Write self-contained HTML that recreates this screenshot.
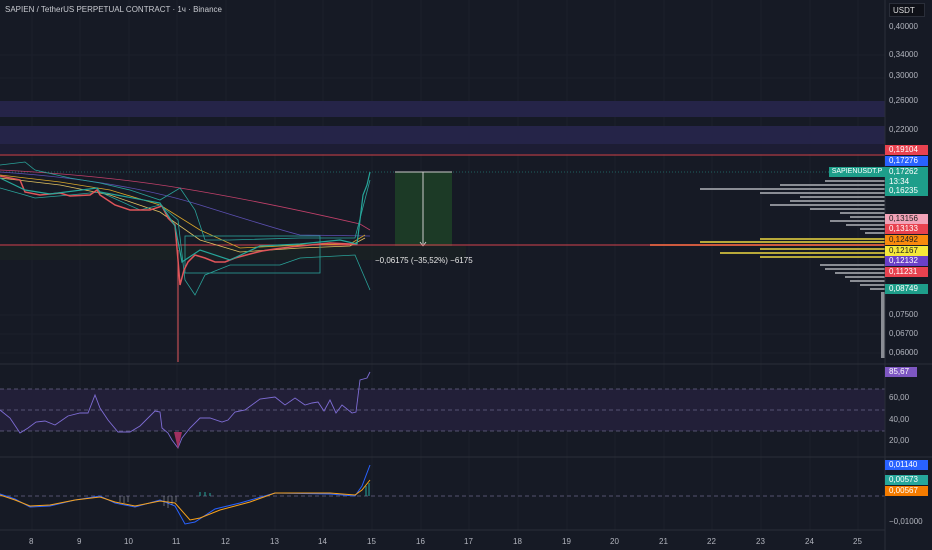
<!DOCTYPE html>
<html><head><meta charset="utf-8"><style>
body{margin:0;width:932px;height:550px;background:#161a25;overflow:hidden;font-family:"Liberation Sans",sans-serif;}
svg{position:absolute;left:0;top:0}
.t{position:absolute;font-size:8px;color:#b2b5be;}
.lb{position:absolute;left:885px;width:43px;height:10px;font-size:8px;line-height:10px;color:#fff;padding-left:4px;box-sizing:border-box;}
.ax{position:absolute;left:889px;font-size:8px;color:#b2b5be;}
</style></head><body>
<svg width="932" height="550">
<g stroke="#1c202b" stroke-width="1">
<line x1="32" y1="0" x2="32" y2="530"/><line x1="80" y1="0" x2="80" y2="530"/><line x1="129" y1="0" x2="129" y2="530"/><line x1="177" y1="0" x2="177" y2="530"/><line x1="226" y1="0" x2="226" y2="530"/><line x1="275" y1="0" x2="275" y2="530"/><line x1="323" y1="0" x2="323" y2="530"/><line x1="372" y1="0" x2="372" y2="530"/><line x1="421" y1="0" x2="421" y2="530"/><line x1="469" y1="0" x2="469" y2="530"/><line x1="518" y1="0" x2="518" y2="530"/><line x1="567" y1="0" x2="567" y2="530"/><line x1="615" y1="0" x2="615" y2="530"/><line x1="664" y1="0" x2="664" y2="530"/><line x1="712" y1="0" x2="712" y2="530"/><line x1="761" y1="0" x2="761" y2="530"/><line x1="810" y1="0" x2="810" y2="530"/><line x1="858" y1="0" x2="858" y2="530"/>
<line x1="0" y1="55" x2="885" y2="55"/><line x1="0" y1="78" x2="885" y2="78"/><line x1="0" y1="315" x2="885" y2="315"/><line x1="0" y1="334" x2="885" y2="334"/><line x1="0" y1="353" x2="885" y2="353"/>
</g>
<rect x="0" y="101" width="885" height="16" fill="#252448"/>
<rect x="0" y="126" width="885" height="18" fill="#252448"/>
<rect x="0" y="144" width="885" height="10" fill="#1d1d34"/>
<line x1="0" y1="155" x2="885" y2="155" stroke="#d4434d" stroke-width="1"/>
<line x1="0" y1="172" x2="885" y2="172" stroke="#26a69a" stroke-dasharray="1,2" stroke-width="0.6"/>
<rect x="395" y="172" width="57" height="74" fill="#1c3a26"/>
<line x1="395" y1="172" x2="452" y2="172" stroke="#ccc"/>
<line x1="423" y1="172" x2="423" y2="245" stroke="#ccc"/>
<path d="M420 242 L423 246 L426 242" stroke="#ccc" fill="none"/>
<rect x="0" y="246" width="466" height="14" fill="#1b2422" opacity="0.7"/>
<g fill="#8a8d94">
<rect x="825" y="180" width="60" height="2"/><rect x="780" y="184" width="105" height="2"/><rect x="700" y="188" width="185" height="2"/><rect x="760" y="192" width="125" height="2"/><rect x="800" y="196" width="85" height="2"/><rect x="790" y="200" width="95" height="2"/><rect x="770" y="204" width="115" height="2"/><rect x="810" y="208" width="75" height="2"/><rect x="840" y="212" width="45" height="2"/><rect x="850" y="216" width="35" height="2"/><rect x="830" y="220" width="55" height="2"/><rect x="846" y="224" width="39" height="2"/><rect x="860" y="228" width="25" height="2"/><rect x="865" y="232" width="20" height="2"/>
<rect x="820" y="264" width="65" height="2"/><rect x="825" y="268" width="60" height="2"/><rect x="835" y="272" width="50" height="2"/><rect x="845" y="276" width="40" height="2"/><rect x="850" y="280" width="35" height="2"/><rect x="860" y="284" width="25" height="2"/><rect x="870" y="288" width="15" height="2"/>
<rect x="881" y="292" width="4" height="66"/>
</g>
<g fill="#b8a93a">
<rect x="760" y="238" width="125" height="2"/><rect x="700" y="241" width="185" height="2"/><rect x="650" y="244" width="235" height="2" fill="#c9702e"/><rect x="760" y="248" width="125" height="2"/><rect x="720" y="252" width="165" height="2"/><rect x="760" y="256" width="125" height="2"/>
</g>
<line x1="0" y1="245" x2="885" y2="245" stroke="#d4434d" stroke-width="1"/>
<g fill="none" stroke-width="0.8">
<path d="M0 170 Q100 175 180 188 T360 224 L370 230" stroke="#c2406a"/>
<path d="M0 172 Q120 180 200 205 T300 235 L370 236" stroke="#5b4fb0"/>
<path d="M0 175 L60 182 L110 190 L160 205 L200 230 L240 248 L300 245 L350 244 L365 235" stroke="#d9a62a"/>
<path d="M0 178 L60 185 L110 195 L160 212 L200 240 L240 252 L300 248 L350 246 L365 238" stroke="#e0c060"/>
<path d="M0 165 L25 162 L35 170 L70 178 L100 183 L130 190 L160 200 L180 188 L195 210 L205 240 L230 240 L300 238 L355 238 L370 180" stroke="#2aa39a"/>
<path d="M0 188 L25 195 L35 198 L70 195 L100 192 L140 210 L160 205 L178 220 L185 280 L195 295 L205 275 L230 265 L280 265 L300 258 L355 255 L370 290" stroke="#2aa39a"/>
<rect x="185" y="236" width="135" height="37" stroke="#2aa39a"/>
</g>
<polyline fill="none" stroke="#e0555a" stroke-width="1.5" points="0,176 10,178 20,180 25,192 40,195 60,193 70,196 90,195 97,190 100,195 115,205 130,210 150,210 162,206 168,218 175,225 178,260 180,285 184,270 188,262 195,255 205,258 215,262 225,262 235,258 250,254 262,251 275,249 290,247 310,245 330,243 350,244 357,244"/>
<polyline fill="none" stroke="#26a69a" stroke-width="1.2" points="0,178 25,190 50,194 97,188 100,192 160,203 175,226 182,262 200,250 230,260 260,246 300,244 340,240 357,244 360,220 363,195 367,185 370,172"/>
<line x1="178" y1="250" x2="178" y2="362" stroke="#e0555a" stroke-width="1"/>
<text x="375" y="263" font-size="8" fill="#e6e6e6" font-family="Liberation Sans">−0,06175 (−35,52%) −6175</text>
<line x1="0" y1="364" x2="932" y2="364" stroke="#2a2e39"/>
<rect x="0" y="389" width="885" height="42" fill="#221f38"/>
<g stroke="#6a6588" stroke-dasharray="4,3" stroke-width="0.8">
<line x1="0" y1="389" x2="885" y2="389"/><line x1="0" y1="410" x2="885" y2="410"/><line x1="0" y1="431" x2="885" y2="431"/></g>
<polyline fill="none" stroke="#7e6cd4" stroke-width="0.9" points="0,410 10,418 20,433 28,428 36,422 45,421 55,425 68,416 80,413 88,413 95,395 100,408 108,420 118,432 130,432 140,426 155,411 160,412 162,428 168,433 172,440 178,448 182,438 190,428 200,418 210,418 222,422 228,420 235,412 245,410 260,399 275,397 285,405 295,398 305,405 312,403 318,402 324,411 330,400 336,413 342,405 352,413 356,412 360,380 367,378 370,372"/>
<path d="M174 432 L178 449 L182 432 Z" fill="#a03060"/>
<line x1="0" y1="457" x2="932" y2="457" stroke="#2a2e39"/>
<line x1="0" y1="496" x2="885" y2="496" stroke="#6a6588" stroke-dasharray="4,3" stroke-width="0.8"/>
<polyline fill="none" stroke="#2962ff" stroke-width="1" points="0,494 15,499 30,507 50,506 75,500 100,496 115,503 135,507 160,500 175,506 185,524 195,522 215,509 240,503 275,493 330,494 355,496 362,486 370,465"/>
<polyline fill="none" stroke="#f7a21b" stroke-width="1" points="0,495 15,500 30,506 50,505 75,500 100,497 115,502 135,506 160,501 175,503 190,520 200,518 220,510 250,502 275,493 330,493 355,495 362,490 370,480"/>
<g stroke="#b2b5be" stroke-width="0.5"><path d="M120 496 V502 M124 496V503 M128 496V502 M164 496V506 M168 496V508 M172 496V505 M176 496V502"/></g>
<path d="M200 496 V492 M205 496V492 M210 496V493 M366 496V486 M369 496V483" stroke="#26a69a"/>
<line x1="885" y1="0" x2="885" y2="550" stroke="#2a2e39"/>
<line x1="0" y1="530" x2="885" y2="530" stroke="#2a2e39"/>
</svg>
<div class="t" style="left:5px;top:5px;color:#c8cad0">SAPIEN / TetherUS PERPETUAL CONTRACT · 1ч · Binance</div>
<div style="position:absolute;left:889px;top:3px;width:36px;height:14px;background:#0f1118;border:1px solid #2a2e39;font-size:8px;color:#ddd;line-height:14px;padding-left:3px;box-sizing:border-box">USDT</div>
<div class="ax" style="top:22px">0,40000</div><div class="ax" style="top:50px">0,34000</div><div class="ax" style="top:71px">0,30000</div><div class="ax" style="top:96px">0,26000</div><div class="ax" style="top:125px">0,22000</div>
<div class="ax" style="top:310px">0,07500</div><div class="ax" style="top:329px">0,06700</div><div class="ax" style="top:348px">0,06000</div>
<div class="ax" style="top:393px">60,00</div><div class="ax" style="top:415px">40,00</div><div class="ax" style="top:436px">20,00</div><div class="ax" style="top:517px">−0,01000</div>
<div class="lb" style="top:145px;background:#e8424f">0,19104</div>
<div class="lb" style="top:156px;background:#2962ff">0,17276</div>
<div class="lb" style="top:167px;height:20px;background:#1e9e8a">0,17262<br>13:34</div>
<div style="position:absolute;left:829px;top:167px;height:10px;width:56px;background:#1e9e8a;color:#fff;font-size:7px;line-height:10px;text-align:center">SAPIENUSDT.P</div>
<div class="lb" style="top:186px;background:#1e9e8a">0,16235</div>
<div class="lb" style="top:214px;background:#f2a3b8;color:#222">0,13156</div>
<div class="lb" style="top:224px;background:#e8424f">0,13133</div>
<div class="lb" style="top:235px;background:#f98a0d;color:#222">0,12492</div>
<div class="lb" style="top:246px;background:#f5e83a;color:#222">0,12167</div>
<div class="lb" style="top:256px;background:#6a40c8">0,12132</div>
<div class="lb" style="top:267px;background:#e8424f">0,11231</div>
<div class="lb" style="top:284px;background:#1e9e8a">0,08749</div>
<div class="lb" style="top:367px;width:32px;background:#7e57c2">85,67</div>
<div class="lb" style="top:460px;background:#2962ff">0,01140</div>
<div class="lb" style="top:475px;background:#26a69a">0,00573</div>
<div class="lb" style="top:486px;background:#f57c00">0,00567</div>
<div class="t" style="top:537px;left:29px">8</div><div class="t" style="top:537px;left:77px">9</div><div class="t" style="top:537px;left:124px">10</div><div class="t" style="top:537px;left:172px">11</div><div class="t" style="top:537px;left:221px">12</div><div class="t" style="top:537px;left:270px">13</div><div class="t" style="top:537px;left:318px">14</div><div class="t" style="top:537px;left:367px">15</div><div class="t" style="top:537px;left:416px">16</div><div class="t" style="top:537px;left:464px">17</div><div class="t" style="top:537px;left:513px">18</div><div class="t" style="top:537px;left:562px">19</div><div class="t" style="top:537px;left:610px">20</div><div class="t" style="top:537px;left:659px">21</div><div class="t" style="top:537px;left:707px">22</div><div class="t" style="top:537px;left:756px">23</div><div class="t" style="top:537px;left:805px">24</div><div class="t" style="top:537px;left:853px">25</div>
</body></html>
